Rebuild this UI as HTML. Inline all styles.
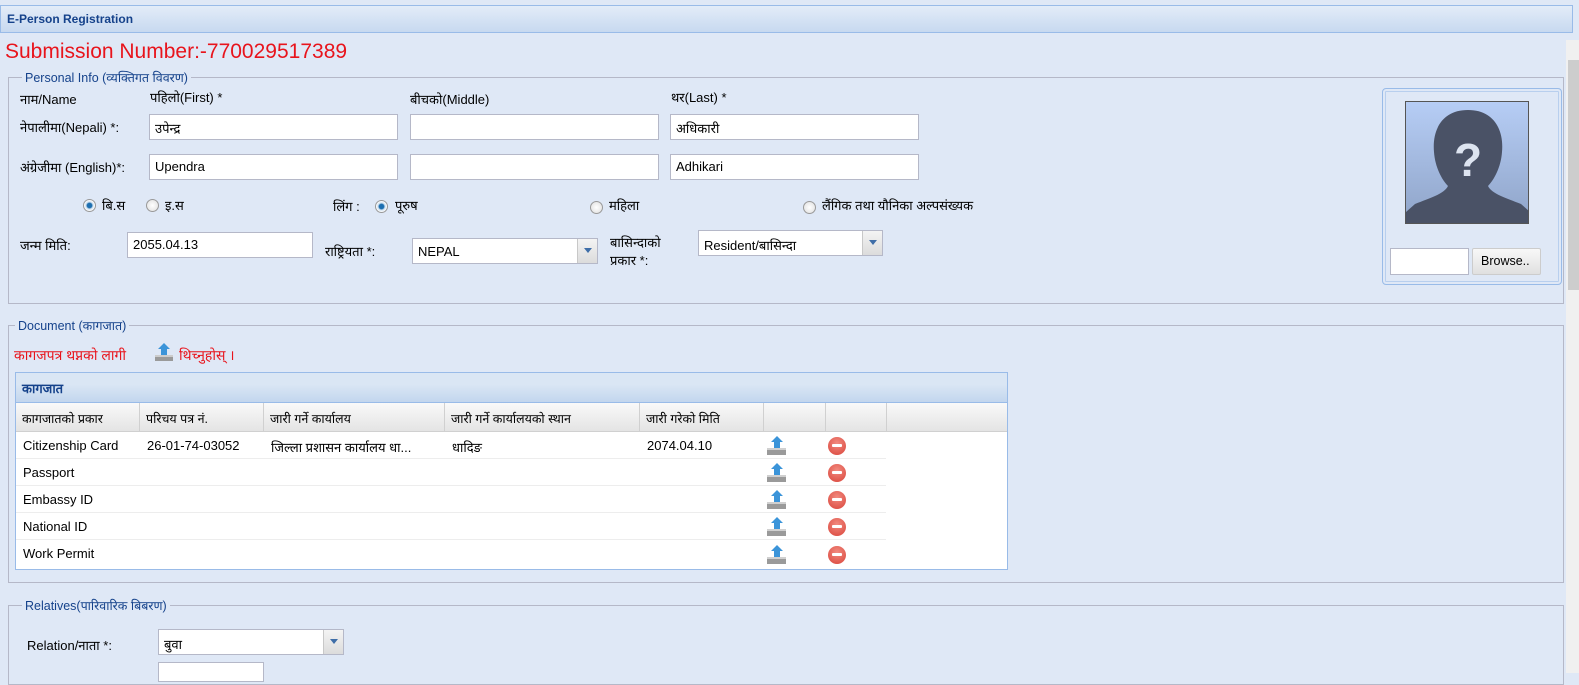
<!DOCTYPE html>
<html><head><meta charset="utf-8">
<style>
*{box-sizing:border-box;margin:0;padding:0}
body{width:1579px;height:673px;overflow:hidden;background:#dfe8f6;font-family:"Liberation Sans","Noto Sans CJK SC",sans-serif;font-size:13px;color:#000;position:relative}
.a{position:absolute}
.title{left:0;top:5px;width:1573px;height:28px;background:linear-gradient(#e3ecf8,#c7d9f0);border:1px solid #99bbe8;color:#15428b;font-weight:bold;font-size:12px;padding:6px 0 0 6px}
.fs{border:1px solid #b5b8c8;}
.lg{background:#dfe8f6;color:#15428b;padding:0 3px;font-size:12.5px}
.inp{background:#fff;border:1px solid #b5b8c8;height:26px;padding:4px 5px;font-size:13px}
.sel{background:#fff;border:1px solid #b5b8c8;height:26px;padding:5px 5px;font-size:13px}
.sel .arr{position:absolute;right:0;top:0;width:20px;height:24px;background:linear-gradient(#f4f4f4,#dcdcdc);border-left:1px solid #c8c8c8}
.sel .arr:after{content:"";position:absolute;left:6px;top:9px;border:4px solid transparent;border-top:5px solid #3f6ea8}
.rad{width:13px;height:13px;border-radius:50%;border:1px solid #999;background:radial-gradient(#fff,#ddd)}
.rad.on{background:radial-gradient(#1d6fb0 30%,#cfe0ef 45%,#fff 70%)}
.th{background:linear-gradient(#f9f9f9,#e4e4e4);border-right:1px solid #d0d0d0;border-bottom:1px solid #d0d0d0;height:29px;padding:7px 6px;font-size:12.5px}
.td{height:27px;border-bottom:1px solid #ededed;padding:6px 7px;font-size:13px;white-space:nowrap;overflow:hidden}
.del{width:18px;height:18px;border-radius:50%;background:radial-gradient(circle at 50% 35%,#f28b80,#d9443a);}
.del:after{content:"";position:absolute;left:4px;top:7px;width:10px;height:3px;background:#fff;border-radius:1px}
</style></head><body>
<div class="a title">E-Person Registration</div>
<div class="a" style="left:5px;top:40px;color:#e8141c;font-size:21px">Submission Number:-770029517389</div>

<div class="a" style="left:1566px;top:40px;width:13px;height:633px;background:#f0f0f0"></div>
<div class="a" style="left:1568px;top:60px;width:11px;height:230px;background:#cdcdcd"></div>

<div class="a fs" style="left:8px;top:77px;width:1556px;height:227px"></div>
<div class="a lg" style="left:22px;top:69px">Personal Info (व्यक्तिगत विवरण)</div>
<div class="a" style="left:20px;top:90px">नाम/Name</div>
<div class="a" style="left:150px;top:88px">पहिलो(First) *</div>
<div class="a" style="left:410px;top:90px">बीचको(Middle)</div>
<div class="a" style="left:671px;top:88px">थर(Last) *</div>
<div class="a" style="left:20px;top:118px">नेपालीमा(Nepali) *:</div>
<div class="a inp" style="left:149px;top:114px;width:249px">उपेन्द्र</div>
<div class="a inp" style="left:410px;top:114px;width:249px"></div>
<div class="a inp" style="left:670px;top:114px;width:249px">अधिकारी</div>
<div class="a" style="left:20px;top:158px">अंग्रेजीमा (English)*:</div>
<div class="a inp" style="left:149px;top:154px;width:249px">Upendra</div>
<div class="a inp" style="left:410px;top:154px;width:249px"></div>
<div class="a inp" style="left:670px;top:154px;width:249px">Adhikari</div>

<div class="a rad on" style="left:83px;top:199px"></div><div class="a" style="left:102px;top:196px">बि.स</div>
<div class="a rad" style="left:146px;top:199px"></div><div class="a" style="left:165px;top:196px">इ.स</div>
<div class="a" style="left:333px;top:197px">लिंग :</div>
<div class="a rad on" style="left:375px;top:200px"></div><div class="a" style="left:395px;top:196px">पूरुष</div>
<div class="a rad" style="left:590px;top:201px"></div><div class="a" style="left:609px;top:196px">महिला</div>
<div class="a rad" style="left:803px;top:201px"></div><div class="a" style="left:822px;top:196px">लैंगिक तथा यौनिका अल्पसंख्यक</div>

<div class="a" style="left:20px;top:236px">जन्म मिति:</div>
<div class="a inp" style="left:127px;top:232px;width:186px">2055.04.13</div>
<div class="a" style="left:325px;top:242px">राष्ट्रियता *:</div>
<div class="a sel" style="left:412px;top:238px;width:186px">NEPAL<div class="arr"></div></div>
<div class="a" style="left:610px;top:234px;line-height:18px">बासिन्दाको<br>प्रकार *:</div>
<div class="a sel" style="left:698px;top:230px;width:185px">Resident/बासिन्दा<div class="arr"></div></div>

<div class="a" style="left:1382px;top:88px;width:180px;height:197px;border:1px solid #99bbe8;border-radius:4px;box-shadow:inset 0 0 0 2px #dfe8f6,inset 0 0 0 3px #b8cfee"></div>
<div class="a" style="left:1405px;top:101px;width:124px;height:123px;background:linear-gradient(#b6cdf5,#8fa4c8);border:1px solid #555;overflow:hidden">
<svg width="124" height="123" viewBox="0 0 124 123"><path d="M62 8C88 8 98 28 96 50C95 65 88 78 82 84C86 92 100 96 115 102L124 110L124 123L0 123L0 110L9 102C24 96 38 92 42 84C36 78 29 65 28 50C26 28 36 8 62 8Z" fill="#4a5266"/><text x="62" y="74" text-anchor="middle" font-family="Liberation Sans" font-weight="bold" font-size="46" fill="#dde4f0">?</text></svg></div>
<div class="a" style="left:1390px;top:248px;width:79px;height:27px;background:#fff;border:1px solid #b5b8c8"></div>
<div class="a" style="left:1472px;top:248px;width:69px;height:27px;background:linear-gradient(#f8f8f8,#e0e0e0);border:1px solid #ccc;border-radius:2px;padding:5px 0 0 8px;font-size:12.5px">Browse..</div>

<div class="a fs" style="left:8px;top:325px;width:1556px;height:258px"></div>
<div class="a lg" style="left:15px;top:317px">Document (कागजात)</div>
<div class="a" style="left:14px;top:346px;color:#e8141c;font-size:14px">कागजपत्र थप्नको लागी</div>
<svg class="a" style="left:154px;top:342px" width="20" height="20" viewBox="0 0 20 20"><rect x="1" y="13" width="18" height="6" fill="#9a9a9a"/><rect x="1" y="13" width="18" height="2" fill="#ccc"/><path d="M10 1l6 6h-3v6h-6v-6h-3z" fill="#3b94d9"/></svg>
<div class="a" style="left:179px;top:346px;color:#e8141c;font-size:14px">थिच्नुहोस् ।</div>

<div class="a" style="left:15px;top:372px;width:993px;height:198px;border:1px solid #99bbe8;background:#fff"></div>
<div class="a" style="left:16px;top:373px;width:991px;height:30px;background:linear-gradient(#dae6f4 40%,#c2d6ee);border-bottom:1px solid #99bbe8;color:#15428b;font-weight:bold;padding:6px 6px">कागजात</div>
<div class="a" style="left:16px;top:403px;width:991px;height:29px;background:linear-gradient(#f9f9f9,#e4e4e4);border-bottom:1px solid #d0d0d0"></div>
<div class="a th" style="left:16px;top:403px;width:124px">कागजातको प्रकार</div>
<div class="a th" style="left:140px;top:403px;width:124px">परिचय पत्र नं.</div>
<div class="a th" style="left:264px;top:403px;width:181px">जारी गर्ने कार्यालय</div>
<div class="a th" style="left:445px;top:403px;width:195px">जारी गर्ने कार्यालयको स्थान</div>
<div class="a th" style="left:640px;top:403px;width:124px">जारी गरेको मिति</div>
<div class="a th" style="left:764px;top:403px;width:62px"></div>
<div class="a th" style="left:826px;top:403px;width:61px"></div>

<div class="a" style="left:16px;top:432px;width:870px">
<div style="display:flex"><div class="td" style="width:124px">Citizenship Card</div><div class="td" style="width:124px">26-01-74-03052</div><div class="td" style="width:181px">जिल्ला प्रशासन कार्यालय धा...</div><div class="td" style="width:195px">धादिङ</div><div class="td" style="width:124px">2074.04.10</div><div class="td" style="width:122px"></div></div>
<div style="display:flex"><div class="td" style="width:870px">Passport</div></div>
<div style="display:flex"><div class="td" style="width:870px">Embassy ID</div></div>
<div style="display:flex"><div class="td" style="width:870px">National ID</div></div>
<div style="display:flex"><div class="td" style="width:870px;border:0">Work Permit</div></div>
</div>

<div class="a" style="left:766px;top:435px">
<svg width="22" height="136" viewBox="0 0 22 136"><g id="u"><rect x="1" y="13" width="19" height="7" fill="#9a9a9a"/><rect x="1" y="13" width="19" height="2" fill="#d0d0d0"/><path d="M11 1l6 6h-3v6h-6v-6h-3z" fill="#3b94d9"/></g><use href="#u" y="27"/><use href="#u" y="54"/><use href="#u" y="81"/><use href="#u" y="109"/></svg></div>
<div class="a del" style="left:828px;top:437px"></div>
<div class="a del" style="left:828px;top:464px"></div>
<div class="a del" style="left:828px;top:491px"></div>
<div class="a del" style="left:828px;top:518px"></div>
<div class="a del" style="left:828px;top:546px"></div>

<div class="a fs" style="left:8px;top:605px;width:1556px;height:80px"></div>
<div class="a lg" style="left:22px;top:597px">Relatives(पारिवारिक बिबरण)</div>
<div class="a" style="left:27px;top:636px">Relation/नाता *:</div>
<div class="a sel" style="left:158px;top:629px;width:186px">बुवा<div class="arr"></div></div>
<div class="a" style="left:158px;top:662px;width:106px;height:20px;background:#fff;border:1px solid #b5b8c8"></div>
</body></html>
